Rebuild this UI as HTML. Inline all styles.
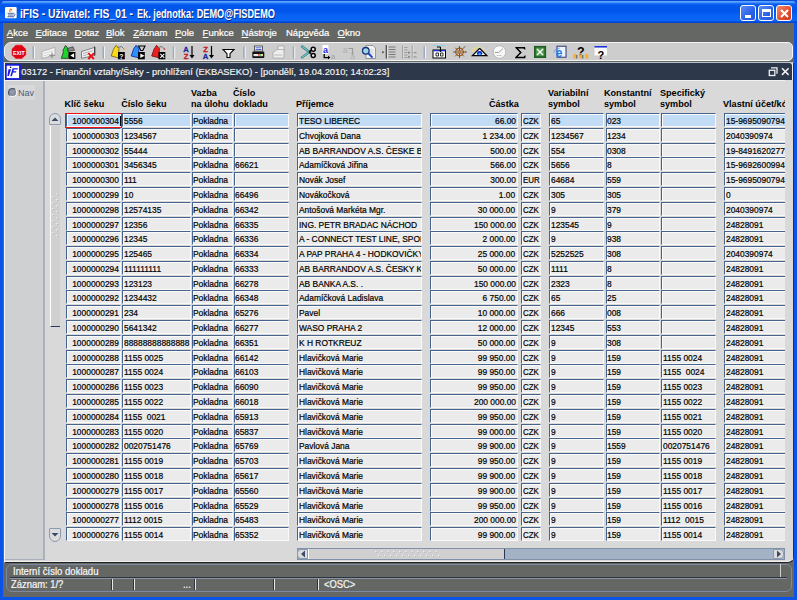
<!DOCTYPE html>
<html><head><meta charset="utf-8"><style>
*{margin:0;padding:0;box-sizing:border-box}
html,body{width:797px;height:600px;overflow:hidden;background:#0a4ee0}
body{position:relative;font-family:"Liberation Sans",sans-serif}
.a{position:absolute}
/* XP frame */
#frame{left:0;top:0;width:797px;height:600px;background:#0b52e6;border-radius:7px 7px 0 0}
#titlebar{left:0;top:0;width:797px;height:23px;border-radius:7px 7px 0 0;
 background:linear-gradient(#0a48da 0px,#0a48da 0.8px,#5aa6fc 1.4px,#4898fa 2.4px,#1868f4 3.6px,#0358ec 5px,#0054ea 11px,#0862f4 15px,#0a66f8 20.5px,#0048dc 22px,#0040d0 23px)}
#ttl{left:20.2px;top:6.6px;color:#fff;font-weight:bold;font-size:12px;white-space:nowrap;text-shadow:1px 1px #0a2a8a;transform:scaleX(0.86);transform-origin:0 0}
#ttl2{left:137.3px;top:6.6px;color:#fff;font-weight:bold;font-size:12px;white-space:nowrap;text-shadow:1px 1px #0a2a8a;transform:scaleX(0.765);transform-origin:0 0}
.wb{top:5px;width:16px;height:16px;border:1px solid #fff;border-radius:3px;background:linear-gradient(135deg,#5a8cf8,#2a63e8 60%,#2558d8)}
#client{left:3px;top:23px;width:791px;height:574px;background:#656765}
/* menu */
.mi{top:26.9px;color:#fff;-webkit-text-stroke:0.2px #fff;font-size:9.5px;white-space:nowrap;line-height:11px}
/* toolbar */
#tb{left:4px;top:41.5px;width:788.5px;height:19.5px;background:#cdcdcd;border:1px solid #f4f4f4;border-radius:7px 5px 5px 7px}
.sep{top:46px;width:2px;height:12px;background:#a8b4c8;border-right:1px solid #fff}
/* inner window */
#iw{left:4px;top:62px;width:790px;height:500.5px;background:#d9d9d9;border-left:1px solid #f4f4f4;border-top:1px solid #b8c0cc;border-right:1px solid #303030;border-bottom:1px solid #202020;border-radius:0 0 6px 0;box-shadow:inset -1px -1px 0 #f0f0f0}
#ititle{left:5px;top:63px;width:787px;height:16.8px;background:#2d394a;border-radius:0 3px 0 0}
#ittl{left:21.3px;top:67px;color:#f6f6f6;-webkit-text-stroke:0.15px #f6f6f6;font-size:9.3px;white-space:nowrap;line-height:11px}
#nav{left:5px;top:80px;width:40px;height:479.5px;background:#cfd0d1;border-right:2px solid #aab0bc;border-bottom:1px solid #a8aebc}
/* fields */
.f{position:absolute;height:14px;background:#ebebeb;border-top:1px solid #46638c;border-left:1px solid #46638c;border-bottom:1px solid #fafafa;border-right:1px solid #fafafa;box-shadow:inset 1px 1px 0 #fbfbfb;overflow:hidden;white-space:nowrap;font-size:8.8px;color:#000;line-height:14.4px;padding-left:0.6px;-webkit-text-stroke:0.2px #000}
.f span{display:inline-block;transform:scaleX(0.955);transform-origin:0 0}
.f.ar span{transform-origin:100% 0}
.f.s{background:#c2dcf6}
.f.ar{text-align:right;padding-right:1.4px}
.h{position:absolute;font-weight:bold;font-size:9.1px;color:#000;white-space:nowrap;line-height:11px}
/* status */
.st{color:#f8f8f8;-webkit-text-stroke:0.2px #f8f8f8;font-size:10px;line-height:11px;white-space:nowrap;transform:scaleX(0.94);transform-origin:0 0}

.f.cm{padding-left:1px}.f.cm span{transform:scaleX(0.9)}

</style></head><body>
<div id="frame" class="a"></div>
<div id="titlebar" class="a"></div>
<svg class="a" style="left:4px;top:6px" width="14" height="14" viewBox="4 6 14 14"><rect x="5" y="7" width="11.7" height="11.2" rx="1" fill="#fbfbf8"/><path d="M10.5 8.3l1.8 1.2l-0.6 1.6l-1.6 1l-1.2-1.2z" fill="#f07818"/><circle cx="10.8" cy="10.7" r="0.6" fill="#fff"/><path d="M7.6 13.3h6.2M8 15h5.5M7.5 16.7h6.5" stroke="#3a5a98" stroke-width="0.9"/><path d="M14 13.3q1.8 1.2 0 3" fill="none" stroke="#3a5a98" stroke-width="0.8"/></svg>
<div id="ttl" class="a">iFIS - Uživatel: FIS_01 -</div><div id="ttl2" class="a">Ek. jednotka: DEMO@FISDEMO</div>
<div class="a wb" style="left:740px"><div class="a" style="left:4px;top:9px;width:6px;height:3px;background:#fff"></div></div>
<div class="a wb" style="left:758px"><div class="a" style="left:3px;top:3px;width:9px;height:8px;border:1px solid #fff;border-top-width:3px"></div></div>
<div class="a wb" style="left:776px;background:linear-gradient(135deg,#f08868,#e05030 60%,#c83818)"><svg class="a" style="left:2px;top:2px" width="11" height="11"><path d="M2 2L9 9M9 2L2 9" stroke="#fff" stroke-width="2"/></svg></div>
<div id="client" class="a"></div>
<div class="a mi" style="left:6.8px"><u>A</u>kce</div>
<div class="a mi" style="left:35.4px"><u>E</u>ditace</div>
<div class="a mi" style="left:74.5px"><u>D</u>otaz</div>
<div class="a mi" style="left:106px"><u>B</u>lok</div>
<div class="a mi" style="left:133.2px"><u>Z</u>áznam</div>
<div class="a mi" style="left:175px"><u>P</u>ole</div>
<div class="a mi" style="left:202.6px"><u>F</u>unkce</div>
<div class="a mi" style="left:241.5px"><u>N</u>ástroje</div>
<div class="a mi" style="left:286px">Náp<u>o</u>věda</div>
<div class="a mi" style="left:337.6px"><u>O</u>kno</div>
<div id="tb" class="a"></div>
<svg class="a" style="left:0;top:0" width="797" height="64" viewBox="0 0 797 64">
<!-- EXIT -->
<path d="M15.8 44.8h6l4.4 4.2v6l-4.4 4h-6l-4.3-4v-6z" fill="#de0612" stroke="#f2c8c8" stroke-width="0.5"/>
<text x="18.8" y="54.6" font-family="Liberation Sans" font-weight="bold" font-size="5.2" fill="#fff" text-anchor="middle">EXIT</text>
<!-- separators -->
<g fill="#9aaac2"><rect x="32.5" y="46.5" width="1.6" height="12"/><rect x="102.5" y="46.5" width="1.6" height="12"/><rect x="172.8" y="46.5" width="1.6" height="12"/><rect x="243.2" y="46.5" width="1.6" height="12"/><rect x="292.8" y="46.5" width="1.6" height="12"/><rect x="423.5" y="46.5" width="1.6" height="12"/></g>
<g fill="#fff"><rect x="34.1" y="46.5" width="0.8" height="12"/><rect x="104.1" y="46.5" width="0.8" height="12"/><rect x="174.4" y="46.5" width="0.8" height="12"/><rect x="244.8" y="46.5" width="0.8" height="12"/><rect x="294.4" y="46.5" width="0.8" height="12"/><rect x="425.1" y="46.5" width="0.8" height="12"/></g>
<!-- insert (grayed) -->
<path d="M42 51.5L55 47.3v8L42 58.3z" fill="#f6f6f6" stroke="#a4a4a4" stroke-width="0.8"/><path d="M43.5 53.5l10-2.8M43.5 55.8l6-1.6" stroke="#c4c4c4" stroke-width="0.7"/>
<path d="M52 52.5v5.5M49.3 55.3h5.5" stroke="#8c8c8c" stroke-width="1.2"/>
<!-- green tree with arrow -->
<path d="M61.3 58.3l2.2-6.5l-0.8-0.8l2.8-5.5l2.3 2.5l-0.5 1.8l1.5 2.5l-0.5 6z" fill="#1ed42e" stroke="#0a200c" stroke-width="0.7"/>
<path d="M68 48.3l5-1.5l1.5 3.5l-6 1z" fill="#888" stroke="#222" stroke-width="0.6"/>
<rect x="68.8" y="52" width="6.6" height="7" fill="#000"/><path d="M70.3 55.5l3.8-2.3v4.6z" fill="#fff"/>
<!-- grey delete with red x -->
<path d="M81.5 51.5L95 47.3v8L81.5 58.3z" fill="#f0f0f0" stroke="#6a6a6a" stroke-width="0.8"/><path d="M83 53.5l10-2.8M83 55.8l5-1.4" stroke="#9a9a9a" stroke-width="0.7"/><path d="M94.6 46.5v9" stroke="#333" stroke-width="1"/>
<path d="M88.3 53.2l5.6 5.8M93.9 53.2l-5.6 5.8" stroke="#ee0c14" stroke-width="1.8"/>
<!-- yellow -->
<path d="M111.2 56l2.3-6.8l2.6-3.9l2.8 3.2l-0.3 9.3z" fill="#f8dc18" stroke="#7a5a08" stroke-width="0.8"/>
<path d="M117.5 47.5l4-1l2.5 2.5" fill="none" stroke="#666" stroke-width="0.9"/><path d="M122.5 49.2l1.5-1.4l1 2.2z" fill="#f0a020"/>
<rect x="118" y="52" width="6.8" height="7.3" fill="#000"/><text x="121.4" y="58.5" font-family="Liberation Sans" font-weight="bold" font-size="6.8" fill="#fff" text-anchor="middle">?</text>
<!-- blue -->
<path d="M131.2 56l2.3-6.8l2.6-3.9l2.8 3.2l-0.3 9.3z" fill="#2890f8" stroke="#0818a0" stroke-width="0.8"/>
<path d="M138.5 46h6.5l-2.2 4.5h-2z" fill="none" stroke="#000" stroke-width="1.1"/>
<rect x="138" y="52" width="6.8" height="7.3" fill="#000"/><path d="M140.3 53.6l4.2 2.2l-4.2 2.2z" fill="#fff"/>
<!-- red -->
<path d="M151.7 56l2.3-6.8l2.6-3.9l2.8 3.2l-0.3 9.3z" fill="#ec2020" stroke="#700808" stroke-width="0.8"/>
<path d="M158 47.5l4-1l2.5 2.5" fill="none" stroke="#666" stroke-width="0.9"/><path d="M163 49.2l1.5-1.4l1 2.2z" fill="#e04040"/>
<rect x="158.5" y="52" width="6.8" height="7.3" fill="#000"/><path d="M160.3 53.8l4 4M164.3 53.8l-4 4" stroke="#fff" stroke-width="1.1"/>
<!-- sort AZ -->
<text x="186" y="51.8" font-family="Liberation Sans" font-weight="bold" font-size="7.6" fill="#1a2aa0" stroke="#1a2aa0" stroke-width="0.3" text-anchor="middle">A</text>
<text x="186" y="58.6" font-family="Liberation Sans" font-weight="bold" font-size="7.6" fill="#c01818" stroke="#c01818" stroke-width="0.3" text-anchor="middle">Z</text>
<path d="M192 46v10" stroke="#000" stroke-width="1.2"/><path d="M189.5 55h5l-2.5 3.5z" fill="#000"/>
<!-- sort ZA -->
<text x="205.5" y="51.8" font-family="Liberation Sans" font-weight="bold" font-size="7.6" fill="#c01818" stroke="#c01818" stroke-width="0.3" text-anchor="middle">Z</text>
<text x="205.5" y="58.6" font-family="Liberation Sans" font-weight="bold" font-size="7.6" fill="#1a2aa0" stroke="#1a2aa0" stroke-width="0.3" text-anchor="middle">A</text>
<path d="M211.5 46v10" stroke="#000" stroke-width="1.2"/><path d="M209 55h5l-2.5 3.5z" fill="#000"/>
<!-- filter -->
<path d="M223 49.5h11l-4 4.2v3.8h-3v-3.8z" fill="#fff" stroke="#000" stroke-width="1.1"/>
<!-- printer -->
<rect x="254.5" y="46" width="8" height="5" fill="#fff" stroke="#222" stroke-width="0.7"/><path d="M255.5 47.8h6M255.5 49.5h6" stroke="#2040d0" stroke-width="0.8"/>
<rect x="252.3" y="51.5" width="12" height="6.5" rx="1" fill="#111"/><rect x="253.5" y="54" width="9.5" height="2.2" fill="#e8e8e8"/><rect x="258" y="54.3" width="1.5" height="1.3" fill="#e02020"/><rect x="259.6" y="54.3" width="1.5" height="1.3" fill="#20c020"/><rect x="261.2" y="54.3" width="1.3" height="1.3" fill="#f0c020"/>
<!-- gray print setup -->
<g fill="#ededed" stroke="#a0a0a0" stroke-width="0.7"><rect x="278" y="46" width="6" height="6"/><path d="M273 52.5l4-3h7v8.5h-11z"/></g><path d="M274.5 55h8" stroke="#aaa" stroke-width="0.7"/>
<!-- scissors -->
<path d="M301.3 46l8.2 6M301.3 57.8l8.2-6" stroke="#2a6a70" stroke-width="2.2"/><path d="M301.6 46.2l7.8 5.6M301.6 57.6l7.8-5.6" stroke="#6ccccc" stroke-width="1.2"/>
<path d="M309 52l2-1.5M309 52l2 1.5" stroke="#000" stroke-width="1.6"/>
<ellipse cx="313.2" cy="49.3" rx="2" ry="2" fill="#f0f0f0" stroke="#000" stroke-width="1.5"/><ellipse cx="313.2" cy="55.6" rx="2" ry="2" fill="#f0f0f0" stroke="#000" stroke-width="1.5"/>
<!-- copy a -->
<rect x="322.5" y="45" width="6" height="9" fill="#fff"/><text x="325.5" y="52.8" font-family="Liberation Sans" font-weight="bold" font-size="9" fill="#1428e8" text-anchor="middle">a</text>
<path d="M324.2 54v3.6h4.3" fill="none" stroke="#000" stroke-width="1.3"/><path d="M328 55.6l2.3 2l-2.3 2z" fill="#000"/>
<text x="333" y="59" font-family="Liberation Sans" font-size="8" fill="#a0a0a0" text-anchor="middle">a</text>
<!-- paste gray -->
<text x="345.3" y="53" font-family="Liberation Sans" font-size="9" fill="#b0b0b0" text-anchor="middle">a</text>
<path d="M348.5 48.5h4v5.5" fill="none" stroke="#9a9a9a" stroke-width="1.1"/><path d="M351 53l1.5 2l1.5-2z" fill="#9a9a9a"/>
<text x="352.8" y="59.2" font-family="Liberation Sans" font-size="8" fill="#b0b0b0" text-anchor="middle">a</text>
<!-- search -->
<path d="M366 45.5h7l2.5 2.5v10.5h-9.5z" fill="#f2f2f2" stroke="#777" stroke-width="0.7"/><path d="M368 50h5.5M368 52h5.5M368 54h5.5" stroke="#bbb" stroke-width="0.6"/>
<circle cx="365.8" cy="50.8" r="3.3" fill="#9ad8e8" stroke="#18307a" stroke-width="1.3"/><path d="M368.3 53.3l4.2 4.3" stroke="#1848c8" stroke-width="2"/>
<!-- list -->
<path d="M382.3 50.8l2 1.4l-2 1.4z" fill="#444"/><path d="M386.3 45v13.5" stroke="#202020" stroke-width="1.1"/><path d="M387.3 45v13.5" stroke="#fafafa" stroke-width="0.6"/>
<path d="M388.5 47h7M388.5 49.5h7M388.5 52h7M388.5 54.5h7M388.5 57h7" stroke="#7a7a7a" stroke-width="1"/>
<!-- list2 gray -->
<path d="M402.8 45.5v13M412.3 45.5v13" stroke="#8a8a8a" stroke-width="0.9"/><path d="M403.6 45.5v13M413.1 45.5v13" stroke="#fafafa" stroke-width="0.5"/>
<path d="M404 47.5h3.5M404 50h3.5M404 52.5h3.5M404 55h3.5M404 57.5h3.5" stroke="#9a9a9a" stroke-width="0.9"/>
<path d="M408.3 51.3l2 1.4l-2 1.4zM408.3 55.5l2 1.4l-2 1.4z" fill="#707070"/><path d="M413.5 52.7h3M413.5 56.9h3" stroke="#808080" stroke-width="0.9"/>
<!-- doc arrow -->
<path d="M432.5 45.5h13" stroke="#80d0f0" stroke-width="0.8"/>
<rect x="433" y="50" width="12.5" height="8" fill="#fff" stroke="#000" stroke-width="1"/><rect x="433" y="50" width="12.5" height="1.3" fill="#1a30e0"/>
<path d="M436 53h2.5v3h-2.5zM440.5 53h2.5v3h-2.5z" fill="none" stroke="#000" stroke-width="0.8"/><path d="M437 47h3.5v4" fill="none" stroke="#000" stroke-width="1"/><path d="M439 50.5h3l-1.5 1.8z" fill="#000"/>
<!-- wheel -->
<circle cx="459.5" cy="52" r="3.8" fill="none" stroke="#9a5a18" stroke-width="1.2"/>
<path d="M459.5 46v12M453 52h13M455.2 47.7l8.6 8.6M463.8 47.7l-8.6 8.6" stroke="#8a4a10" stroke-width="0.9"/><circle cx="459.5" cy="52" r="1.1" fill="#c89050"/>
<path d="M464 47.5l1-1M465.5 52h1" stroke="#111" stroke-width="1"/>
<!-- triangle eye -->
<path d="M472.5 55.6h14.3l-7.15-7.2z" fill="#f4f4f4" stroke="#000" stroke-width="1.3" stroke-linejoin="miter"/><ellipse cx="479.6" cy="53.3" rx="2.6" ry="2.2" fill="#0a20e0"/><circle cx="479.6" cy="53.9" r="1.2" fill="#18d0f8"/>
<g fill="#f8f040"><circle cx="472.8" cy="50.8" r="0.7"/><circle cx="474.3" cy="49" r="0.7"/><circle cx="476.5" cy="47.8" r="0.7"/><circle cx="479.6" cy="47.3" r="0.7"/><circle cx="481.5" cy="47.6" r="0.7"/><circle cx="483.5" cy="48.8" r="0.7"/><circle cx="485.3" cy="50.7" r="0.7"/></g>
<!-- gauge -->
<circle cx="499.5" cy="52" r="6.3" fill="#f8f8f8" stroke="#b4b4b4" stroke-width="0.9"/><path d="M495 52.5h3.6l4.3-3.8" fill="none" stroke="#888" stroke-width="0.8"/><path d="M497 55.5h5" stroke="#999" stroke-width="0.8" stroke-dasharray="1 0.6"/>
<!-- sigma -->
<path d="M515 47h10l0.5 2.5h-1l-1-1h-5.5l3.8 4l-4.2 4.2h6.2l1-1.2h1l-0.6 2.7h-10.2v-0.8l4.8-4.9l-4.3-4.5z" fill="#000"/>
<!-- excel -->
<rect x="534.3" y="46.2" width="11.5" height="11.5" fill="#1a6a22" stroke="#0a4010" stroke-width="0.6"/><rect x="535.8" y="47.7" width="8.5" height="8.5" fill="#4a9a4a"/><path d="M537 49l6 6M543 49l-6 6" stroke="#f4f4f4" stroke-width="1.6"/>
<!-- IE -->
<rect x="557" y="46.2" width="9" height="11" fill="#f0f4fa" stroke="#1a2470" stroke-width="0.9"/>
<text x="559.2" y="56.8" font-family="Liberation Sans" font-weight="bold" font-size="12" fill="#1e7ce0" text-anchor="middle">e</text>
<path d="M553.8 52.5q1-4 6-4.5" fill="none" stroke="#3aa0f0" stroke-width="0.8"/>
<!-- help -->
<text x="580.8" y="55.8" font-family="Liberation Sans" font-weight="bold" font-size="12.5" fill="#000" text-anchor="middle">?</text>
<g fill="#f4b030"><rect x="573.3" y="54" width="3" height="4.5"/><rect x="579.3" y="54.5" width="3" height="4"/><rect x="585.3" y="54" width="3" height="4.5"/></g>
<g fill="#555"><rect x="576.3" y="55" width="1" height="3.5"/><rect x="582.3" y="55" width="1" height="3.5"/></g>
<!-- help window -->
<rect x="594.5" y="47.5" width="12.5" height="8" fill="#fafafa"/><rect x="594.5" y="46" width="12.5" height="1.5" fill="#1a30e0"/>
<text x="600.8" y="58.5" font-family="Liberation Sans" font-weight="bold" font-size="11" fill="#000" text-anchor="middle">?</text>
</svg>

<div id="iw" class="a"></div>
<div id="ititle" class="a"></div>
<svg class="a" style="left:4.5px;top:64px" width="16" height="16" viewBox="0 0 16 16"><rect x="0.9" y="0.9" width="14" height="14" fill="#fdfdfd" stroke="#1418e0" stroke-width="1.6"/>
<path d="M3.5 5.2h2.6l-2.3 6.8h-1.4z" fill="#1418e0"/><circle cx="5.6" cy="3.3" r="0.8" fill="#000"/><path d="M7.6 4.2h5.3l-0.4 1.4h-3.6l-0.5 1.6h3l-0.4 1.3h-3l-1.1 3.8h-1.6z" fill="#1418e0"/></svg>
<svg class="a" style="left:766px;top:65px" width="26" height="13" viewBox="766 65 26 13"><path d="M771 67.8h6v6" fill="none" stroke="#f0f0f0" stroke-width="1.3"/><rect x="769.3" y="70.3" width="5.5" height="5.2" fill="none" stroke="#f0f0f0" stroke-width="1.3"/><path d="M782 68.3l6.6 6.6M788.6 68.3l-6.6 6.6" stroke="#f4f4f4" stroke-width="1.5"/></svg>
<div id="ittl" class="a">03172 - Finanční vztahy/Šeky - prohlížení (EKBASEKO) - [pondělí, 19.04.2010; 14:02:23]</div>
<div id="nav" class="a"></div>
<div class="a" style="left:5px;top:79.8px;width:787px;height:1px;background:#f2f2f2"></div>
<div class="a" style="left:8px;top:85px;width:27px;height:15px;background:#d8d8d8"></div>
<div class="a" style="left:8px;top:88px;width:8.5px;height:8.5px;border-radius:50%;background:radial-gradient(circle at 45% 45%,#9aa6b8,#6a7688);border:1px solid;border-color:#4a5060 #f4f4f4 #f4f4f4 #4a5060"></div>
<div class="a" style="left:18px;top:87.5px;color:#4a5a78;font-size:9px">Nav</div>
<div class="h" style="left:64.4px;top:98.8px">Klíč šeku</div>
<div class="h" style="left:121.2px;top:98.8px">Číslo šeku</div>
<div class="h" style="left:191px;top:87.8px">Vazba<br>na úlohu</div>
<div class="h" style="left:233px;top:87.8px">Číslo<br>dokladu</div>
<div class="h" style="left:296px;top:98.8px">Příjemce</div>
<div class="h" style="left:489px;top:98.8px">Částka</div>
<div class="h" style="left:548px;top:87.8px">Variabilní<br>symbol</div>
<div class="h" style="left:604px;top:87.8px">Konstantní<br>symbol</div>
<div class="h" style="left:660px;top:87.8px">Specifický<br>symbol</div>
<div class="h" style="left:723px;top:98.8px">Vlastní účet/kód</div>
<div class="a" style="left:785px;top:80px;width:8px;height:480px;background:#d9d9d9"></div>
<div class="f s ar" style="left:65.5px;top:113.00px;width:55.5px"><span>1000000304</span></div>
<div class="f s" style="left:122px;top:113.00px;width:68.5px"><span>5556</span></div>
<div class="f s" style="left:191.5px;top:113.00px;width:41.0px"><span>Pokladna</span></div>
<div class="f s" style="left:233.5px;top:113.00px;width:55.0px"><span></span></div>
<div class="f s" style="left:297px;top:113.00px;width:125px"><span>TESO LIBEREC</span></div>
<div class="f s ar" style="left:430px;top:113.00px;width:88px"><span>66.00</span></div>
<div class="f s cm" style="left:521px;top:113.00px;width:20px"><span>CZK</span></div>
<div class="f s" style="left:549px;top:113.00px;width:54.5px"><span>65</span></div>
<div class="f s" style="left:605.5px;top:113.00px;width:54.0px"><span>023</span></div>
<div class="f s" style="left:661px;top:113.00px;width:55px"><span></span></div>
<div class="f s" style="left:724px;top:113.00px;width:61.5px;border-right:none"><span>15-9695090794</span></div>
<div class="f ar" style="left:65.5px;top:127.79px;width:55.5px"><span>1000000303</span></div>
<div class="f" style="left:122px;top:127.79px;width:68.5px"><span>1234567</span></div>
<div class="f" style="left:191.5px;top:127.79px;width:41.0px"><span>Pokladna</span></div>
<div class="f" style="left:233.5px;top:127.79px;width:55.0px"><span></span></div>
<div class="f" style="left:297px;top:127.79px;width:125px"><span>Chvojková Dana</span></div>
<div class="f ar" style="left:430px;top:127.79px;width:88px"><span>1 234.00</span></div>
<div class="f cm" style="left:521px;top:127.79px;width:20px"><span>CZK</span></div>
<div class="f" style="left:549px;top:127.79px;width:54.5px"><span>1234567</span></div>
<div class="f" style="left:605.5px;top:127.79px;width:54.0px"><span>1234</span></div>
<div class="f" style="left:661px;top:127.79px;width:55px"><span></span></div>
<div class="f" style="left:724px;top:127.79px;width:61.5px;border-right:none"><span>2040390974</span></div>
<div class="f ar" style="left:65.5px;top:142.58px;width:55.5px"><span>1000000302</span></div>
<div class="f" style="left:122px;top:142.58px;width:68.5px"><span>55444</span></div>
<div class="f" style="left:191.5px;top:142.58px;width:41.0px"><span>Pokladna</span></div>
<div class="f" style="left:233.5px;top:142.58px;width:55.0px"><span></span></div>
<div class="f" style="left:297px;top:142.58px;width:125px"><span>AB BARRANDOV A.S. ČESKE BU</span></div>
<div class="f ar" style="left:430px;top:142.58px;width:88px"><span>500.00</span></div>
<div class="f cm" style="left:521px;top:142.58px;width:20px"><span>CZK</span></div>
<div class="f" style="left:549px;top:142.58px;width:54.5px"><span>554</span></div>
<div class="f" style="left:605.5px;top:142.58px;width:54.0px"><span>0308</span></div>
<div class="f" style="left:661px;top:142.58px;width:55px"><span></span></div>
<div class="f" style="left:724px;top:142.58px;width:61.5px;border-right:none"><span>19-8491620277</span></div>
<div class="f ar" style="left:65.5px;top:157.37px;width:55.5px"><span>1000000301</span></div>
<div class="f" style="left:122px;top:157.37px;width:68.5px"><span>3456345</span></div>
<div class="f" style="left:191.5px;top:157.37px;width:41.0px"><span>Pokladna</span></div>
<div class="f" style="left:233.5px;top:157.37px;width:55.0px"><span>66621</span></div>
<div class="f" style="left:297px;top:157.37px;width:125px"><span>Adamíčková Jiřina</span></div>
<div class="f ar" style="left:430px;top:157.37px;width:88px"><span>566.00</span></div>
<div class="f cm" style="left:521px;top:157.37px;width:20px"><span>CZK</span></div>
<div class="f" style="left:549px;top:157.37px;width:54.5px"><span>5656</span></div>
<div class="f" style="left:605.5px;top:157.37px;width:54.0px"><span>8</span></div>
<div class="f" style="left:661px;top:157.37px;width:55px"><span></span></div>
<div class="f" style="left:724px;top:157.37px;width:61.5px;border-right:none"><span>15-9692600994</span></div>
<div class="f ar" style="left:65.5px;top:172.16px;width:55.5px"><span>1000000300</span></div>
<div class="f" style="left:122px;top:172.16px;width:68.5px"><span>111</span></div>
<div class="f" style="left:191.5px;top:172.16px;width:41.0px"><span>Pokladna</span></div>
<div class="f" style="left:233.5px;top:172.16px;width:55.0px"><span></span></div>
<div class="f" style="left:297px;top:172.16px;width:125px"><span>Novák Josef</span></div>
<div class="f ar" style="left:430px;top:172.16px;width:88px"><span>300.00</span></div>
<div class="f cm" style="left:521px;top:172.16px;width:20px"><span>EUR</span></div>
<div class="f" style="left:549px;top:172.16px;width:54.5px"><span>64684</span></div>
<div class="f" style="left:605.5px;top:172.16px;width:54.0px"><span>559</span></div>
<div class="f" style="left:661px;top:172.16px;width:55px"><span></span></div>
<div class="f" style="left:724px;top:172.16px;width:61.5px;border-right:none"><span>15-9695090794</span></div>
<div class="f ar" style="left:65.5px;top:186.95px;width:55.5px"><span>1000000299</span></div>
<div class="f" style="left:122px;top:186.95px;width:68.5px"><span>10</span></div>
<div class="f" style="left:191.5px;top:186.95px;width:41.0px"><span>Pokladna</span></div>
<div class="f" style="left:233.5px;top:186.95px;width:55.0px"><span>66496</span></div>
<div class="f" style="left:297px;top:186.95px;width:125px"><span>Novákočková</span></div>
<div class="f ar" style="left:430px;top:186.95px;width:88px"><span>1.00</span></div>
<div class="f cm" style="left:521px;top:186.95px;width:20px"><span>CZK</span></div>
<div class="f" style="left:549px;top:186.95px;width:54.5px"><span>305</span></div>
<div class="f" style="left:605.5px;top:186.95px;width:54.0px"><span>305</span></div>
<div class="f" style="left:661px;top:186.95px;width:55px"><span></span></div>
<div class="f" style="left:724px;top:186.95px;width:61.5px;border-right:none"><span>0</span></div>
<div class="f ar" style="left:65.5px;top:201.74px;width:55.5px"><span>1000000298</span></div>
<div class="f" style="left:122px;top:201.74px;width:68.5px"><span>12574135</span></div>
<div class="f" style="left:191.5px;top:201.74px;width:41.0px"><span>Pokladna</span></div>
<div class="f" style="left:233.5px;top:201.74px;width:55.0px"><span>66342</span></div>
<div class="f" style="left:297px;top:201.74px;width:125px"><span>Antošová Markéta Mgr.</span></div>
<div class="f ar" style="left:430px;top:201.74px;width:88px"><span>30 000.00</span></div>
<div class="f cm" style="left:521px;top:201.74px;width:20px"><span>CZK</span></div>
<div class="f" style="left:549px;top:201.74px;width:54.5px"><span>9</span></div>
<div class="f" style="left:605.5px;top:201.74px;width:54.0px"><span>379</span></div>
<div class="f" style="left:661px;top:201.74px;width:55px"><span></span></div>
<div class="f" style="left:724px;top:201.74px;width:61.5px;border-right:none"><span>2040390974</span></div>
<div class="f ar" style="left:65.5px;top:216.53px;width:55.5px"><span>1000000297</span></div>
<div class="f" style="left:122px;top:216.53px;width:68.5px"><span>12356</span></div>
<div class="f" style="left:191.5px;top:216.53px;width:41.0px"><span>Pokladna</span></div>
<div class="f" style="left:233.5px;top:216.53px;width:55.0px"><span>66335</span></div>
<div class="f" style="left:297px;top:216.53px;width:125px"><span> ING. PETR BRADAC NÁCHOD</span></div>
<div class="f ar" style="left:430px;top:216.53px;width:88px"><span>150 000.00</span></div>
<div class="f cm" style="left:521px;top:216.53px;width:20px"><span>CZK</span></div>
<div class="f" style="left:549px;top:216.53px;width:54.5px"><span>123545</span></div>
<div class="f" style="left:605.5px;top:216.53px;width:54.0px"><span>9</span></div>
<div class="f" style="left:661px;top:216.53px;width:55px"><span></span></div>
<div class="f" style="left:724px;top:216.53px;width:61.5px;border-right:none"><span>24828091</span></div>
<div class="f ar" style="left:65.5px;top:231.32px;width:55.5px"><span>1000000296</span></div>
<div class="f" style="left:122px;top:231.32px;width:68.5px"><span>12345</span></div>
<div class="f" style="left:191.5px;top:231.32px;width:41.0px"><span>Pokladna</span></div>
<div class="f" style="left:233.5px;top:231.32px;width:55.0px"><span>66336</span></div>
<div class="f" style="left:297px;top:231.32px;width:125px"><span>A - CONNECT TEST LINE, SPOL. S</span></div>
<div class="f ar" style="left:430px;top:231.32px;width:88px"><span>2 000.00</span></div>
<div class="f cm" style="left:521px;top:231.32px;width:20px"><span>CZK</span></div>
<div class="f" style="left:549px;top:231.32px;width:54.5px"><span>9</span></div>
<div class="f" style="left:605.5px;top:231.32px;width:54.0px"><span>938</span></div>
<div class="f" style="left:661px;top:231.32px;width:55px"><span></span></div>
<div class="f" style="left:724px;top:231.32px;width:61.5px;border-right:none"><span>24828091</span></div>
<div class="f ar" style="left:65.5px;top:246.11px;width:55.5px"><span>1000000295</span></div>
<div class="f" style="left:122px;top:246.11px;width:68.5px"><span>125465</span></div>
<div class="f" style="left:191.5px;top:246.11px;width:41.0px"><span>Pokladna</span></div>
<div class="f" style="left:233.5px;top:246.11px;width:55.0px"><span>66334</span></div>
<div class="f" style="left:297px;top:246.11px;width:125px"><span>A PAP PRAHA 4 - HODKOVIČKY</span></div>
<div class="f ar" style="left:430px;top:246.11px;width:88px"><span>25 000.00</span></div>
<div class="f cm" style="left:521px;top:246.11px;width:20px"><span>CZK</span></div>
<div class="f" style="left:549px;top:246.11px;width:54.5px"><span>5252525</span></div>
<div class="f" style="left:605.5px;top:246.11px;width:54.0px"><span>308</span></div>
<div class="f" style="left:661px;top:246.11px;width:55px"><span></span></div>
<div class="f" style="left:724px;top:246.11px;width:61.5px;border-right:none"><span>2040390974</span></div>
<div class="f ar" style="left:65.5px;top:260.90px;width:55.5px"><span>1000000294</span></div>
<div class="f" style="left:122px;top:260.90px;width:68.5px"><span>111111111</span></div>
<div class="f" style="left:191.5px;top:260.90px;width:41.0px"><span>Pokladna</span></div>
<div class="f" style="left:233.5px;top:260.90px;width:55.0px"><span>66333</span></div>
<div class="f" style="left:297px;top:260.90px;width:125px"><span>AB BARRANDOV A.S. ČESKY K</span></div>
<div class="f ar" style="left:430px;top:260.90px;width:88px"><span>50 000.00</span></div>
<div class="f cm" style="left:521px;top:260.90px;width:20px"><span>CZK</span></div>
<div class="f" style="left:549px;top:260.90px;width:54.5px"><span>1111</span></div>
<div class="f" style="left:605.5px;top:260.90px;width:54.0px"><span>8</span></div>
<div class="f" style="left:661px;top:260.90px;width:55px"><span></span></div>
<div class="f" style="left:724px;top:260.90px;width:61.5px;border-right:none"><span>24828091</span></div>
<div class="f ar" style="left:65.5px;top:275.69px;width:55.5px"><span>1000000293</span></div>
<div class="f" style="left:122px;top:275.69px;width:68.5px"><span>123123</span></div>
<div class="f" style="left:191.5px;top:275.69px;width:41.0px"><span>Pokladna</span></div>
<div class="f" style="left:233.5px;top:275.69px;width:55.0px"><span>66278</span></div>
<div class="f" style="left:297px;top:275.69px;width:125px"><span>AB BANKA A.S. .</span></div>
<div class="f ar" style="left:430px;top:275.69px;width:88px"><span>150 000.00</span></div>
<div class="f cm" style="left:521px;top:275.69px;width:20px"><span>CZK</span></div>
<div class="f" style="left:549px;top:275.69px;width:54.5px"><span>2323</span></div>
<div class="f" style="left:605.5px;top:275.69px;width:54.0px"><span>8</span></div>
<div class="f" style="left:661px;top:275.69px;width:55px"><span></span></div>
<div class="f" style="left:724px;top:275.69px;width:61.5px;border-right:none"><span>24828091</span></div>
<div class="f ar" style="left:65.5px;top:290.48px;width:55.5px"><span>1000000292</span></div>
<div class="f" style="left:122px;top:290.48px;width:68.5px"><span>1234432</span></div>
<div class="f" style="left:191.5px;top:290.48px;width:41.0px"><span>Pokladna</span></div>
<div class="f" style="left:233.5px;top:290.48px;width:55.0px"><span>66348</span></div>
<div class="f" style="left:297px;top:290.48px;width:125px"><span>Adamíčková Ladislava</span></div>
<div class="f ar" style="left:430px;top:290.48px;width:88px"><span>6 750.00</span></div>
<div class="f cm" style="left:521px;top:290.48px;width:20px"><span>CZK</span></div>
<div class="f" style="left:549px;top:290.48px;width:54.5px"><span>65</span></div>
<div class="f" style="left:605.5px;top:290.48px;width:54.0px"><span>25</span></div>
<div class="f" style="left:661px;top:290.48px;width:55px"><span></span></div>
<div class="f" style="left:724px;top:290.48px;width:61.5px;border-right:none"><span>24828091</span></div>
<div class="f ar" style="left:65.5px;top:305.27px;width:55.5px"><span>1000000291</span></div>
<div class="f" style="left:122px;top:305.27px;width:68.5px"><span>234</span></div>
<div class="f" style="left:191.5px;top:305.27px;width:41.0px"><span>Pokladna</span></div>
<div class="f" style="left:233.5px;top:305.27px;width:55.0px"><span>65276</span></div>
<div class="f" style="left:297px;top:305.27px;width:125px"><span>Pavel</span></div>
<div class="f ar" style="left:430px;top:305.27px;width:88px"><span>10 000.00</span></div>
<div class="f cm" style="left:521px;top:305.27px;width:20px"><span>CZK</span></div>
<div class="f" style="left:549px;top:305.27px;width:54.5px"><span>666</span></div>
<div class="f" style="left:605.5px;top:305.27px;width:54.0px"><span>008</span></div>
<div class="f" style="left:661px;top:305.27px;width:55px"><span></span></div>
<div class="f" style="left:724px;top:305.27px;width:61.5px;border-right:none"><span>24828091</span></div>
<div class="f ar" style="left:65.5px;top:320.06px;width:55.5px"><span>1000000290</span></div>
<div class="f" style="left:122px;top:320.06px;width:68.5px"><span>5641342</span></div>
<div class="f" style="left:191.5px;top:320.06px;width:41.0px"><span>Pokladna</span></div>
<div class="f" style="left:233.5px;top:320.06px;width:55.0px"><span>66277</span></div>
<div class="f" style="left:297px;top:320.06px;width:125px"><span>WASO PRAHA 2</span></div>
<div class="f ar" style="left:430px;top:320.06px;width:88px"><span>12 000.00</span></div>
<div class="f cm" style="left:521px;top:320.06px;width:20px"><span>CZK</span></div>
<div class="f" style="left:549px;top:320.06px;width:54.5px"><span>12345</span></div>
<div class="f" style="left:605.5px;top:320.06px;width:54.0px"><span>553</span></div>
<div class="f" style="left:661px;top:320.06px;width:55px"><span></span></div>
<div class="f" style="left:724px;top:320.06px;width:61.5px;border-right:none"><span>24828091</span></div>
<div class="f ar" style="left:65.5px;top:334.85px;width:55.5px"><span>1000000289</span></div>
<div class="f" style="left:122px;top:334.85px;width:68.5px"><span>88888888888888</span></div>
<div class="f" style="left:191.5px;top:334.85px;width:41.0px"><span>Pokladna</span></div>
<div class="f" style="left:233.5px;top:334.85px;width:55.0px"><span>66351</span></div>
<div class="f" style="left:297px;top:334.85px;width:125px"><span>K H ROTKREUZ</span></div>
<div class="f ar" style="left:430px;top:334.85px;width:88px"><span>50 000.00</span></div>
<div class="f cm" style="left:521px;top:334.85px;width:20px"><span>CZK</span></div>
<div class="f" style="left:549px;top:334.85px;width:54.5px"><span>9</span></div>
<div class="f" style="left:605.5px;top:334.85px;width:54.0px"><span>308</span></div>
<div class="f" style="left:661px;top:334.85px;width:55px"><span></span></div>
<div class="f" style="left:724px;top:334.85px;width:61.5px;border-right:none"><span>24828091</span></div>
<div class="f ar" style="left:65.5px;top:349.64px;width:55.5px"><span>1000000288</span></div>
<div class="f" style="left:122px;top:349.64px;width:68.5px"><span>1155 0025</span></div>
<div class="f" style="left:191.5px;top:349.64px;width:41.0px"><span>Pokladna</span></div>
<div class="f" style="left:233.5px;top:349.64px;width:55.0px"><span>66142</span></div>
<div class="f" style="left:297px;top:349.64px;width:125px"><span>Hlavičková Marie</span></div>
<div class="f ar" style="left:430px;top:349.64px;width:88px"><span>99 950.00</span></div>
<div class="f cm" style="left:521px;top:349.64px;width:20px"><span>CZK</span></div>
<div class="f" style="left:549px;top:349.64px;width:54.5px"><span>9</span></div>
<div class="f" style="left:605.5px;top:349.64px;width:54.0px"><span>159</span></div>
<div class="f" style="left:661px;top:349.64px;width:55px"><span>1155 0024</span></div>
<div class="f" style="left:724px;top:349.64px;width:61.5px;border-right:none"><span>24828091</span></div>
<div class="f ar" style="left:65.5px;top:364.43px;width:55.5px"><span>1000000287</span></div>
<div class="f" style="left:122px;top:364.43px;width:68.5px"><span>1155 0024</span></div>
<div class="f" style="left:191.5px;top:364.43px;width:41.0px"><span>Pokladna</span></div>
<div class="f" style="left:233.5px;top:364.43px;width:55.0px"><span>66103</span></div>
<div class="f" style="left:297px;top:364.43px;width:125px"><span>Hlavičková Marie</span></div>
<div class="f ar" style="left:430px;top:364.43px;width:88px"><span>99 950.00</span></div>
<div class="f cm" style="left:521px;top:364.43px;width:20px"><span>CZK</span></div>
<div class="f" style="left:549px;top:364.43px;width:54.5px"><span>9</span></div>
<div class="f" style="left:605.5px;top:364.43px;width:54.0px"><span>159</span></div>
<div class="f" style="left:661px;top:364.43px;width:55px"><span>1155&nbsp;&nbsp;0024</span></div>
<div class="f" style="left:724px;top:364.43px;width:61.5px;border-right:none"><span>24828091</span></div>
<div class="f ar" style="left:65.5px;top:379.22px;width:55.5px"><span>1000000286</span></div>
<div class="f" style="left:122px;top:379.22px;width:68.5px"><span>1155 0023</span></div>
<div class="f" style="left:191.5px;top:379.22px;width:41.0px"><span>Pokladna</span></div>
<div class="f" style="left:233.5px;top:379.22px;width:55.0px"><span>66090</span></div>
<div class="f" style="left:297px;top:379.22px;width:125px"><span>Hlavičková Marie</span></div>
<div class="f ar" style="left:430px;top:379.22px;width:88px"><span>99 950.00</span></div>
<div class="f cm" style="left:521px;top:379.22px;width:20px"><span>CZK</span></div>
<div class="f" style="left:549px;top:379.22px;width:54.5px"><span>9</span></div>
<div class="f" style="left:605.5px;top:379.22px;width:54.0px"><span>159</span></div>
<div class="f" style="left:661px;top:379.22px;width:55px"><span>1155 0023</span></div>
<div class="f" style="left:724px;top:379.22px;width:61.5px;border-right:none"><span>24828091</span></div>
<div class="f ar" style="left:65.5px;top:394.01px;width:55.5px"><span>1000000285</span></div>
<div class="f" style="left:122px;top:394.01px;width:68.5px"><span>1155 0022</span></div>
<div class="f" style="left:191.5px;top:394.01px;width:41.0px"><span>Pokladna</span></div>
<div class="f" style="left:233.5px;top:394.01px;width:55.0px"><span>66018</span></div>
<div class="f" style="left:297px;top:394.01px;width:125px"><span>Hlavičková Marie</span></div>
<div class="f ar" style="left:430px;top:394.01px;width:88px"><span>200 000.00</span></div>
<div class="f cm" style="left:521px;top:394.01px;width:20px"><span>CZK</span></div>
<div class="f" style="left:549px;top:394.01px;width:54.5px"><span>9</span></div>
<div class="f" style="left:605.5px;top:394.01px;width:54.0px"><span>159</span></div>
<div class="f" style="left:661px;top:394.01px;width:55px"><span>1155 0022</span></div>
<div class="f" style="left:724px;top:394.01px;width:61.5px;border-right:none"><span>24828091</span></div>
<div class="f ar" style="left:65.5px;top:408.80px;width:55.5px"><span>1000000284</span></div>
<div class="f" style="left:122px;top:408.80px;width:68.5px"><span>1155&nbsp;&nbsp;0021</span></div>
<div class="f" style="left:191.5px;top:408.80px;width:41.0px"><span>Pokladna</span></div>
<div class="f" style="left:233.5px;top:408.80px;width:55.0px"><span>65913</span></div>
<div class="f" style="left:297px;top:408.80px;width:125px"><span>Hlavičková Marie</span></div>
<div class="f ar" style="left:430px;top:408.80px;width:88px"><span>99 950.00</span></div>
<div class="f cm" style="left:521px;top:408.80px;width:20px"><span>CZK</span></div>
<div class="f" style="left:549px;top:408.80px;width:54.5px"><span>9</span></div>
<div class="f" style="left:605.5px;top:408.80px;width:54.0px"><span>159</span></div>
<div class="f" style="left:661px;top:408.80px;width:55px"><span>1155 0021</span></div>
<div class="f" style="left:724px;top:408.80px;width:61.5px;border-right:none"><span>24828091</span></div>
<div class="f ar" style="left:65.5px;top:423.59px;width:55.5px"><span>1000000283</span></div>
<div class="f" style="left:122px;top:423.59px;width:68.5px"><span>1155 0020</span></div>
<div class="f" style="left:191.5px;top:423.59px;width:41.0px"><span>Pokladna</span></div>
<div class="f" style="left:233.5px;top:423.59px;width:55.0px"><span>65837</span></div>
<div class="f" style="left:297px;top:423.59px;width:125px"><span>Hlavičková Marie</span></div>
<div class="f ar" style="left:430px;top:423.59px;width:88px"><span>99 000.00</span></div>
<div class="f cm" style="left:521px;top:423.59px;width:20px"><span>CZK</span></div>
<div class="f" style="left:549px;top:423.59px;width:54.5px"><span>9</span></div>
<div class="f" style="left:605.5px;top:423.59px;width:54.0px"><span>159</span></div>
<div class="f" style="left:661px;top:423.59px;width:55px"><span>1155 0020</span></div>
<div class="f" style="left:724px;top:423.59px;width:61.5px;border-right:none"><span>24828091</span></div>
<div class="f ar" style="left:65.5px;top:438.38px;width:55.5px"><span>1000000282</span></div>
<div class="f" style="left:122px;top:438.38px;width:68.5px"><span>0020751476</span></div>
<div class="f" style="left:191.5px;top:438.38px;width:41.0px"><span>Pokladna</span></div>
<div class="f" style="left:233.5px;top:438.38px;width:55.0px"><span>65769</span></div>
<div class="f" style="left:297px;top:438.38px;width:125px"><span>Pavlová Jana</span></div>
<div class="f ar" style="left:430px;top:438.38px;width:88px"><span>99 900.00</span></div>
<div class="f cm" style="left:521px;top:438.38px;width:20px"><span>CZK</span></div>
<div class="f" style="left:549px;top:438.38px;width:54.5px"><span>9</span></div>
<div class="f" style="left:605.5px;top:438.38px;width:54.0px"><span>1559</span></div>
<div class="f" style="left:661px;top:438.38px;width:55px"><span>0020751476</span></div>
<div class="f" style="left:724px;top:438.38px;width:61.5px;border-right:none"><span>24828091</span></div>
<div class="f ar" style="left:65.5px;top:453.17px;width:55.5px"><span>1000000281</span></div>
<div class="f" style="left:122px;top:453.17px;width:68.5px"><span>1155 0019</span></div>
<div class="f" style="left:191.5px;top:453.17px;width:41.0px"><span>Pokladna</span></div>
<div class="f" style="left:233.5px;top:453.17px;width:55.0px"><span>65703</span></div>
<div class="f" style="left:297px;top:453.17px;width:125px"><span>Hlavičková Marie</span></div>
<div class="f ar" style="left:430px;top:453.17px;width:88px"><span>99 950.00</span></div>
<div class="f cm" style="left:521px;top:453.17px;width:20px"><span>CZK</span></div>
<div class="f" style="left:549px;top:453.17px;width:54.5px"><span>9</span></div>
<div class="f" style="left:605.5px;top:453.17px;width:54.0px"><span>159</span></div>
<div class="f" style="left:661px;top:453.17px;width:55px"><span>1155 0019</span></div>
<div class="f" style="left:724px;top:453.17px;width:61.5px;border-right:none"><span>24828091</span></div>
<div class="f ar" style="left:65.5px;top:467.96px;width:55.5px"><span>1000000280</span></div>
<div class="f" style="left:122px;top:467.96px;width:68.5px"><span>1155 0018</span></div>
<div class="f" style="left:191.5px;top:467.96px;width:41.0px"><span>Pokladna</span></div>
<div class="f" style="left:233.5px;top:467.96px;width:55.0px"><span>65617</span></div>
<div class="f" style="left:297px;top:467.96px;width:125px"><span>Hlavičková Marie</span></div>
<div class="f ar" style="left:430px;top:467.96px;width:88px"><span>99 900.00</span></div>
<div class="f cm" style="left:521px;top:467.96px;width:20px"><span>CZK</span></div>
<div class="f" style="left:549px;top:467.96px;width:54.5px"><span>9</span></div>
<div class="f" style="left:605.5px;top:467.96px;width:54.0px"><span>159</span></div>
<div class="f" style="left:661px;top:467.96px;width:55px"><span>1155 0018</span></div>
<div class="f" style="left:724px;top:467.96px;width:61.5px;border-right:none"><span>24828091</span></div>
<div class="f ar" style="left:65.5px;top:482.75px;width:55.5px"><span>1000000279</span></div>
<div class="f" style="left:122px;top:482.75px;width:68.5px"><span>1155 0017</span></div>
<div class="f" style="left:191.5px;top:482.75px;width:41.0px"><span>Pokladna</span></div>
<div class="f" style="left:233.5px;top:482.75px;width:55.0px"><span>65560</span></div>
<div class="f" style="left:297px;top:482.75px;width:125px"><span>Hlavičková Marie</span></div>
<div class="f ar" style="left:430px;top:482.75px;width:88px"><span>99 900.00</span></div>
<div class="f cm" style="left:521px;top:482.75px;width:20px"><span>CZK</span></div>
<div class="f" style="left:549px;top:482.75px;width:54.5px"><span>9</span></div>
<div class="f" style="left:605.5px;top:482.75px;width:54.0px"><span>159</span></div>
<div class="f" style="left:661px;top:482.75px;width:55px"><span>1155 0017</span></div>
<div class="f" style="left:724px;top:482.75px;width:61.5px;border-right:none"><span>24828091</span></div>
<div class="f ar" style="left:65.5px;top:497.54px;width:55.5px"><span>1000000278</span></div>
<div class="f" style="left:122px;top:497.54px;width:68.5px"><span>1155 0016</span></div>
<div class="f" style="left:191.5px;top:497.54px;width:41.0px"><span>Pokladna</span></div>
<div class="f" style="left:233.5px;top:497.54px;width:55.0px"><span>65529</span></div>
<div class="f" style="left:297px;top:497.54px;width:125px"><span>Hlavičková Marie</span></div>
<div class="f ar" style="left:430px;top:497.54px;width:88px"><span>99 950.00</span></div>
<div class="f cm" style="left:521px;top:497.54px;width:20px"><span>CZK</span></div>
<div class="f" style="left:549px;top:497.54px;width:54.5px"><span>9</span></div>
<div class="f" style="left:605.5px;top:497.54px;width:54.0px"><span>159</span></div>
<div class="f" style="left:661px;top:497.54px;width:55px"><span>1155 0016</span></div>
<div class="f" style="left:724px;top:497.54px;width:61.5px;border-right:none"><span>24828091</span></div>
<div class="f ar" style="left:65.5px;top:512.33px;width:55.5px"><span>1000000277</span></div>
<div class="f" style="left:122px;top:512.33px;width:68.5px"><span>1112 0015</span></div>
<div class="f" style="left:191.5px;top:512.33px;width:41.0px"><span>Pokladna</span></div>
<div class="f" style="left:233.5px;top:512.33px;width:55.0px"><span>65483</span></div>
<div class="f" style="left:297px;top:512.33px;width:125px"><span>Hlavičková Marie</span></div>
<div class="f ar" style="left:430px;top:512.33px;width:88px"><span>200 000.00</span></div>
<div class="f cm" style="left:521px;top:512.33px;width:20px"><span>CZK</span></div>
<div class="f" style="left:549px;top:512.33px;width:54.5px"><span>9</span></div>
<div class="f" style="left:605.5px;top:512.33px;width:54.0px"><span>159</span></div>
<div class="f" style="left:661px;top:512.33px;width:55px"><span>1112&nbsp;&nbsp;0015</span></div>
<div class="f" style="left:724px;top:512.33px;width:61.5px;border-right:none"><span>24828091</span></div>
<div class="f ar" style="left:65.5px;top:527.12px;width:55.5px"><span>1000000276</span></div>
<div class="f" style="left:122px;top:527.12px;width:68.5px"><span>1155 0014</span></div>
<div class="f" style="left:191.5px;top:527.12px;width:41.0px"><span>Pokladna</span></div>
<div class="f" style="left:233.5px;top:527.12px;width:55.0px"><span>65352</span></div>
<div class="f" style="left:297px;top:527.12px;width:125px"><span>Hlavičková Marie</span></div>
<div class="f ar" style="left:430px;top:527.12px;width:88px"><span>99 900.00</span></div>
<div class="f cm" style="left:521px;top:527.12px;width:20px"><span>CZK</span></div>
<div class="f" style="left:549px;top:527.12px;width:54.5px"><span>9</span></div>
<div class="f" style="left:605.5px;top:527.12px;width:54.0px"><span>159</span></div>
<div class="f" style="left:661px;top:527.12px;width:55px"><span>1155 0014</span></div>
<div class="f" style="left:724px;top:527.12px;width:61.5px;border-right:none"><span>24828091</span></div>
<div class="a" style="left:785px;top:100px;width:8px;height:445px;background:#d9d9d9"></div>
<div class="a" style="left:65px;top:113px;width:57px;height:15px;border:1.6px solid #f41010"></div>
<div class="a" style="left:119.5px;top:115.5px;width:1.2px;height:10px;background:#000"></div>
<!-- vertical scrollbar -->
<div class="a" style="left:49px;top:113px;width:12px;height:12px;border:1px solid #8a9ab0;border-radius:6px 6px 1px 1px;background:#dcdcdc"></div>
<svg class="a" style="left:51px;top:116px" width="8" height="6"><path d="M0.5 5L4 1.5L7.5 5Z" fill="#3a4a6a"/></svg>
<div class="a" style="left:50px;top:126px;width:10px;height:201px;background:#d0d0d0;border-left:1px solid #fff;border-bottom:1px solid #2a3a5a"></div>
<div class="a" style="left:49px;top:527.5px;width:12px;height:14px;border:1px solid #8a9ab0;border-radius:1px 1px 6px 6px;background:#dcdcdc"></div>
<svg class="a" style="left:51px;top:532px" width="8" height="6"><path d="M0.5 1L4 4.5L7.5 1Z" fill="#3a4a6a"/></svg>
<!-- horizontal scrollbar -->
<div class="a" style="left:296.5px;top:548px;width:488px;height:11.5px;background:#a4b2c6;border:1px solid #8090a8"></div>
<div class="a" style="left:297px;top:548.5px;width:11px;height:10.5px;background:#dcdcdc;border:1px solid #8a9ab0;border-radius:4px 0 0 4px"></div>
<svg class="a" style="left:300px;top:550px" width="6" height="8"><path d="M5 0.5L1 4L5 7.5Z" fill="#3a4a6a"/></svg>
<div class="a" style="left:308px;top:548.5px;width:197px;height:10.5px;background:#d0d0d0;border-left:1px solid #fff;border-right:1px solid #2a3a5a"></div>
<div class="a" style="left:773px;top:548.5px;width:11px;height:10.5px;background:#dcdcdc;border:1px solid #8a9ab0;border-radius:0 4px 4px 0"></div>
<svg class="a" style="left:776px;top:550px" width="6" height="8"><path d="M1 0.5L5 4L1 7.5Z" fill="#3a4a6a"/></svg>
<svg class="a" style="left:0;top:0" width="797" height="600"><circle cx="57" cy="194.0" r="0.8" fill="#fff"/><circle cx="57.6" cy="194.6" r="0.5" fill="#8a94a4"/><circle cx="53" cy="197.0" r="0.8" fill="#fff"/><circle cx="53.6" cy="197.6" r="0.5" fill="#8a94a4"/><circle cx="57" cy="200.0" r="0.8" fill="#fff"/><circle cx="57.6" cy="200.6" r="0.5" fill="#8a94a4"/><circle cx="53" cy="203.0" r="0.8" fill="#fff"/><circle cx="53.6" cy="203.6" r="0.5" fill="#8a94a4"/><circle cx="57" cy="206.0" r="0.8" fill="#fff"/><circle cx="57.6" cy="206.6" r="0.5" fill="#8a94a4"/><circle cx="53" cy="209.0" r="0.8" fill="#fff"/><circle cx="53.6" cy="209.6" r="0.5" fill="#8a94a4"/><circle cx="57" cy="212.0" r="0.8" fill="#fff"/><circle cx="57.6" cy="212.6" r="0.5" fill="#8a94a4"/><circle cx="53" cy="215.0" r="0.8" fill="#fff"/><circle cx="53.6" cy="215.6" r="0.5" fill="#8a94a4"/><circle cx="57" cy="218.0" r="0.8" fill="#fff"/><circle cx="57.6" cy="218.6" r="0.5" fill="#8a94a4"/><circle cx="53" cy="221.0" r="0.8" fill="#fff"/><circle cx="53.6" cy="221.6" r="0.5" fill="#8a94a4"/><circle cx="57" cy="224.0" r="0.8" fill="#fff"/><circle cx="57.6" cy="224.6" r="0.5" fill="#8a94a4"/><circle cx="53" cy="227.0" r="0.8" fill="#fff"/><circle cx="53.6" cy="227.6" r="0.5" fill="#8a94a4"/><circle cx="57" cy="230.0" r="0.8" fill="#fff"/><circle cx="57.6" cy="230.6" r="0.5" fill="#8a94a4"/><circle cx="53" cy="233.0" r="0.8" fill="#fff"/><circle cx="53.6" cy="233.6" r="0.5" fill="#8a94a4"/><circle cx="57" cy="236.0" r="0.8" fill="#fff"/><circle cx="57.6" cy="236.6" r="0.5" fill="#8a94a4"/><circle cx="376.0" cy="551.5" r="0.8" fill="#fff"/><circle cx="376.6" cy="552.1" r="0.5" fill="#8a94a4"/><circle cx="379.0" cy="555.5" r="0.8" fill="#fff"/><circle cx="379.6" cy="556.1" r="0.5" fill="#8a94a4"/><circle cx="382.0" cy="551.5" r="0.8" fill="#fff"/><circle cx="382.6" cy="552.1" r="0.5" fill="#8a94a4"/><circle cx="385.0" cy="555.5" r="0.8" fill="#fff"/><circle cx="385.6" cy="556.1" r="0.5" fill="#8a94a4"/><circle cx="388.0" cy="551.5" r="0.8" fill="#fff"/><circle cx="388.6" cy="552.1" r="0.5" fill="#8a94a4"/><circle cx="391.0" cy="555.5" r="0.8" fill="#fff"/><circle cx="391.6" cy="556.1" r="0.5" fill="#8a94a4"/><circle cx="394.0" cy="551.5" r="0.8" fill="#fff"/><circle cx="394.6" cy="552.1" r="0.5" fill="#8a94a4"/><circle cx="397.0" cy="555.5" r="0.8" fill="#fff"/><circle cx="397.6" cy="556.1" r="0.5" fill="#8a94a4"/><circle cx="400.0" cy="551.5" r="0.8" fill="#fff"/><circle cx="400.6" cy="552.1" r="0.5" fill="#8a94a4"/><circle cx="403.0" cy="555.5" r="0.8" fill="#fff"/><circle cx="403.6" cy="556.1" r="0.5" fill="#8a94a4"/><circle cx="406.0" cy="551.5" r="0.8" fill="#fff"/><circle cx="406.6" cy="552.1" r="0.5" fill="#8a94a4"/><circle cx="409.0" cy="555.5" r="0.8" fill="#fff"/><circle cx="409.6" cy="556.1" r="0.5" fill="#8a94a4"/><circle cx="412.0" cy="551.5" r="0.8" fill="#fff"/><circle cx="412.6" cy="552.1" r="0.5" fill="#8a94a4"/><circle cx="415.0" cy="555.5" r="0.8" fill="#fff"/><circle cx="415.6" cy="556.1" r="0.5" fill="#8a94a4"/><circle cx="418.0" cy="551.5" r="0.8" fill="#fff"/><circle cx="418.6" cy="552.1" r="0.5" fill="#8a94a4"/><circle cx="421.0" cy="555.5" r="0.8" fill="#fff"/><circle cx="421.6" cy="556.1" r="0.5" fill="#8a94a4"/><circle cx="424.0" cy="551.5" r="0.8" fill="#fff"/><circle cx="424.6" cy="552.1" r="0.5" fill="#8a94a4"/><circle cx="427.0" cy="555.5" r="0.8" fill="#fff"/><circle cx="427.6" cy="556.1" r="0.5" fill="#8a94a4"/><circle cx="430.0" cy="551.5" r="0.8" fill="#fff"/><circle cx="430.6" cy="552.1" r="0.5" fill="#8a94a4"/><circle cx="433.0" cy="555.5" r="0.8" fill="#fff"/><circle cx="433.6" cy="556.1" r="0.5" fill="#8a94a4"/><circle cx="436.0" cy="551.5" r="0.8" fill="#fff"/><circle cx="436.6" cy="552.1" r="0.5" fill="#8a94a4"/><circle cx="439.0" cy="555.5" r="0.8" fill="#fff"/><circle cx="439.6" cy="556.1" r="0.5" fill="#8a94a4"/></svg>
<!-- status -->
<div class="a" style="left:5.7px;top:563.5px;width:786.5px;height:28.5px;border:1px solid #7c8aa4;border-radius:6px"></div>
<div class="a" style="left:10px;top:576.5px;width:777px;height:1px;background:#2c3444"></div><div class="a" style="left:10px;top:577.5px;width:777px;height:0.8px;background:#8a92a0"></div>
<div class="a st" style="left:13px;top:565.8px;transform:scaleX(0.955)">Interní číslo dokladu</div>
<div class="a st" style="left:11px;top:579px">Záznam: 1/?</div>
<div class="a" style="left:111.0px;top:578.5px;width:1px;height:11.5px;background:#2c3444"></div><div class="a" style="left:112px;top:578.5px;width:1px;height:11.5px;background:#e8e8e8"></div>
<div class="a" style="left:133.0px;top:578.5px;width:1px;height:11.5px;background:#2c3444"></div><div class="a" style="left:134px;top:578.5px;width:1px;height:11.5px;background:#e8e8e8"></div>
<div class="a" style="left:194.0px;top:578.5px;width:1px;height:11.5px;background:#2c3444"></div><div class="a" style="left:195px;top:578.5px;width:1px;height:11.5px;background:#e8e8e8"></div>
<div class="a" style="left:273.0px;top:578.5px;width:1px;height:11.5px;background:#2c3444"></div><div class="a" style="left:274px;top:578.5px;width:1px;height:11.5px;background:#e8e8e8"></div>
<div class="a" style="left:316.5px;top:578.5px;width:1px;height:11.5px;background:#2c3444"></div><div class="a" style="left:317.5px;top:578.5px;width:1px;height:11.5px;background:#e8e8e8"></div>
<div class="a st" style="left:183px;top:579px">...</div>
<div class="a st" style="left:324px;top:579px">&lt;OSC&gt;</div>
<div class="a" style="left:780px;top:564px;width:1px;height:13px;background:#d0d0d0"></div>

</body></html>
